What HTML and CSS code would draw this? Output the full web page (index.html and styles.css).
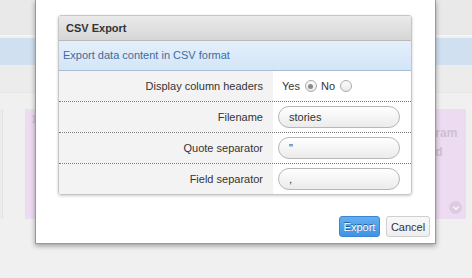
FILE: index.html
```html
<!DOCTYPE html>
<html lang="en">
<head>
    <meta charset="UTF-8">
    <title>CSV Export</title>
    <link rel="stylesheet" href="styles.css">
</head>
<body>
    <!-- 背景のボード -->
    <div class="app">
        <div class="topbar"></div>
        <div class="navbar"></div>
        <div class="subbar"></div>
        <div class="board">
            <div class="edge-col"></div>
            <div class="card card-left"><span class="card-num">1</span></div>
            <div class="board-gap"></div>
            <div class="card card-right">
                <span class="card-title">Program<br>Board</span>
                <span class="card-toggle">
                    <svg width="6" height="4" viewBox="0 0 6 4"><path d="M0.5 0.8 L3 3.2 L5.5 0.8" fill="none" stroke="#fff" stroke-width="1.2"/></svg>
                </span>
            </div>
        </div>
    </div>

    <!-- モーダル -->
    <div class="dialog">
        <div class="panel">
            <div class="panel-head">CSV Export</div>
            <div class="panel-sub">Export data content in CSV format</div>
            <div class="form-row">
                <div class="form-label">Display column headers</div>
                <div class="form-value">
                    <label class="radio">Yes <span class="radio-dot checked"></span></label>
                    <label class="radio">No <span class="radio-dot"></span></label>
                </div>
            </div>
            <div class="form-row">
                <div class="form-label">Filename</div>
                <div class="form-value"><span class="pill-input">stories</span></div>
            </div>
            <div class="form-row">
                <div class="form-label">Quote separator</div>
                <div class="form-value"><span class="pill-input">"</span></div>
            </div>
            <div class="form-row last">
                <div class="form-label">Field separator</div>
                <div class="form-value"><span class="pill-input">,</span></div>
            </div>
        </div>
        <div class="dialog-buttons">
            <button class="btn btn-primary">Export</button>
            <button class="btn btn-cancel">Cancel</button>
        </div>
    </div>
</body>
</html>
```

FILE: styles.css
```css
/* 全体 */
body {
    margin: 0;
    padding: 0;
    width: 472px;
    height: 278px;
    overflow: hidden;
    position: relative;
    font-family: 'Liberation Sans', Arial, sans-serif;
    font-size: 11px;
    color: #333;
    background-color: #f0f0f0;
}

/* 背景のボード */
.app {
    height: 100%;
}

.topbar {
    height: 35px;
    background-color: #e9e9e9;
    border-bottom: 1px solid #f6f6f6;
}

.navbar {
    height: 27px;
    margin-top: 2px;
    background-color: #d1e0f0;
}

.subbar {
    height: 27px;
    background-color: #ececec;
    border-bottom: 1px solid #e6e6e6;
}

.board {
    display: flex;
    padding-top: 16px;
    height: 110px;
}

.edge-col {
    width: 2px;
    background-color: #ececec;
    border-right: 1px solid #e2e2e2;
}

.card {
    background-color: #eddcf1;
    position: relative;
}

.card-left {
    width: 60px;
    margin-left: 22px;
}

.card-num {
    position: absolute;
    left: 6px;
    top: 4px;
    color: #d8c8dc;
    font-weight: bold;
}

.board-gap {
    flex: 1;
}

.card-right {
    width: 110px;
    margin-right: 6px;
}

.card-title {
    position: absolute;
    left: 52px;
    top: 15px;
    font-size: 12px;
    line-height: 19px;
    font-weight: bold;
    color: #cbc2cf;
}

.card-toggle {
    position: absolute;
    right: 4px;
    bottom: 5px;
    width: 13px;
    height: 13px;
    border-radius: 50%;
    background-color: #dccbe1;
    display: flex;
    align-items: center;
    justify-content: center;
}

/* モーダル */
.dialog {
    position: absolute;
    left: 35px;
    top: 0;
    width: 374px;
    height: 228px;
    padding: 15px 3px 0 22px;
    background-color: #fff;
    border: 1px solid #9a9a9a;
    border-top: none;
    box-shadow: 0 2px 5px rgba(0, 0, 0, 0.35);
    display: flex;
    flex-direction: column;
}

.panel {
    width: 352px;
    border: 1px solid #c6c6c6;
    border-radius: 3px;
    box-shadow: 0 1px 3px rgba(0, 0, 0, 0.2);
    overflow: hidden;
}

.panel-head {
    height: 24px;
    line-height: 25px;
    padding-left: 7px;
    font-weight: bold;
    color: #333;
    background: linear-gradient(#eaeaea, #d6d6d6);
    border-bottom: 1px solid #b9b9b9;
}

.panel-sub {
    height: 29px;
    line-height: 29px;
    padding-left: 4px;
    color: #3d6c9e;
    background: linear-gradient(#e4f0fb, #d3e5f8);
    border-bottom: 1px solid #a7bdd5;
}

.form-row {
    display: flex;
    height: 30px;
    border-bottom: 1px dotted #777;
}

.form-row.last {
    border-bottom: none;
}

.form-label {
    width: 204px;
    padding-right: 10px;
    background-color: #f3f3f3;
    text-align: right;
    line-height: 31px;
}

.form-value {
    flex: 1;
    display: flex;
    align-items: center;
    padding-left: 5px;
}

.radio {
    display: flex;
    align-items: center;
    gap: 5px;
    margin-left: 4px;
}

.radio-dot {
    width: 10px;
    height: 10px;
    border-radius: 50%;
    border: 1px solid #aaa;
    background: linear-gradient(#fdfdfd, #e8e8e8);
    display: flex;
    align-items: center;
    justify-content: center;
}

.radio-dot.checked::after {
    content: '';
    width: 5px;
    height: 5px;
    border-radius: 50%;
    background-color: #8a8a8a;
}

.pill-input {
    width: 110px;
    height: 20px;
    line-height: 20px;
    padding-left: 10px;
    border: 1px solid #b7b7b7;
    border-radius: 11px;
    background: linear-gradient(#ffffff, #ebebeb);
    color: #333;
}

/* ボタン */
.dialog-buttons {
    margin-top: auto;
    margin-bottom: 6px;
    margin-right: 2px;
    display: flex;
    justify-content: flex-end;
    gap: 6px;
}

.btn {
    height: 21px;
    padding: 0;
    font-family: 'Liberation Sans', Arial, sans-serif;
    font-size: 11px;
    color: #333;
    border: 1px solid #cfcfcf;
    border-radius: 3px;
    background: linear-gradient(#f9f9f9, #eeeeee);
}

.btn-primary {
    width: 41px;
    color: #fff;
    border-color: #3c86cf;
    background: linear-gradient(#62b0f2, #3f93e3);
    text-shadow: 0 -1px 0 rgba(0, 0, 0, 0.5);
}

.btn-cancel {
    width: 44px;
}
```
